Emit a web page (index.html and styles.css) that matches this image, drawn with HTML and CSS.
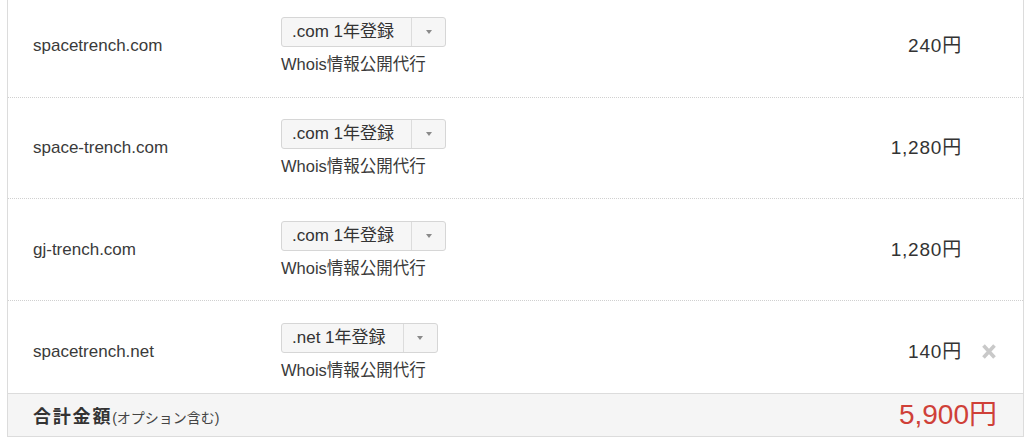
FILE: index.html
```html
<!DOCTYPE html>
<html lang="ja">
<head>
<meta charset="utf-8">
<title>ドメイン一覧</title>
<link rel="stylesheet" href="styles.css">
</head>
<body>
<div class="cart">
  <div class="row">
    <div class="domain">spacetrench.com</div>
    <div class="opts">
      <div class="select"><span class="label">.com 1年登録</span><span class="caret"><i></i></span></div>
      <div class="whois">Whois情報公開代行</div>
    </div>
    <div class="price">240円</div>
    <div class="del"></div>
  </div>
  <div class="row">
    <div class="domain">space-trench.com</div>
    <div class="opts">
      <div class="select"><span class="label">.com 1年登録</span><span class="caret"><i></i></span></div>
      <div class="whois">Whois情報公開代行</div>
    </div>
    <div class="price">1,280円</div>
    <div class="del"></div>
  </div>
  <div class="row">
    <div class="domain">gj-trench.com</div>
    <div class="opts">
      <div class="select"><span class="label">.com 1年登録</span><span class="caret"><i></i></span></div>
      <div class="whois">Whois情報公開代行</div>
    </div>
    <div class="price">1,280円</div>
    <div class="del"></div>
  </div>
  <div class="row last">
    <div class="domain">spacetrench.net</div>
    <div class="opts">
      <div class="select"><span class="label">.net 1年登録</span><span class="caret"><i></i></span></div>
      <div class="whois">Whois情報公開代行</div>
    </div>
    <div class="price">140円</div>
    <div class="del">
      <svg class="x-icon" width="16" height="15" viewBox="0 0 16 15" aria-label="削除">
        <path d="M2.5 1.5 L13.5 13.5 M13.5 1.5 L2.5 13.5" stroke="#c9c9c9" stroke-width="3.6" fill="none"/>
      </svg>
    </div>
  </div>
  <div class="total">
    <div class="total-label"><span class="total-title">合計金額</span><span class="total-note">(オプション含む)</span></div>
    <div class="total-price">5,900円</div>
  </div>
</div>
</body>
</html>
```
FILE: styles.css
```css
html, body {
  margin: 0;
  padding: 0;
  background: #fff;
}

body {
  font-family: "Liberation Sans", "Noto Sans CJK JP", sans-serif;
  color: #333;
  overflow: hidden;
}

.cart {
  box-sizing: border-box;
  width: 1017px;
  margin: -4px 0 0 7px;
  border-left: 1px solid #dcdcdc;
  border-right: 1px solid #dcdcdc;
  border-bottom: 1px solid #dcdcdc;
}

.row {
  display: grid;
  grid-template-columns: 248px 1fr auto 35px;
  align-items: center;
  padding: 21.33px 26px 21.33px 25px;
  border-bottom: 1px dotted #d0d0d0;
}

.row.last {
  padding-top: 22px;
  padding-bottom: 12px;
  border-bottom: none;
}

.domain {
  font-size: 17px;
  line-height: 22px;
  color: #3a3a3a;
}

.opts {
  display: flex;
  flex-direction: column;
  align-items: flex-start;
}

.select {
  display: inline-flex;
  box-sizing: border-box;
  height: 30px;
  border: 1px solid #d6d6d6;
  border-radius: 3px;
  background: #f6f6f6;
}

.label {
  padding: 0 17px 0 10px;
  font-size: 17px;
  line-height: 28px;
  color: #333;
}

.caret {
  display: flex;
  align-items: center;
  justify-content: center;
  width: 33px;
  border-left: 1px solid #dcdcdc;
}

.caret i {
  display: block;
  width: 0;
  height: 0;
  border-top: 4px solid #8a8a8a;
  border-left: 3px solid transparent;
  border-right: 3px solid transparent;
}

.whois {
  margin-top: 6px;
  font-size: 16.5px;
  line-height: 22px;
  color: #3a3a3a;
}

.price {
  font-size: 19px;
  letter-spacing: 0.8px;
  line-height: 24px;
  color: #333;
  text-align: right;
}

.del {
  display: flex;
  justify-content: flex-end;
  align-items: center;
}

.x-icon {
  display: block;
}

.total {
  display: flex;
  justify-content: space-between;
  align-items: center;
  height: 42px;
  padding: 0 26px 0 25px;
  border-top: 1px solid #dcdcdc;
  background: #f5f5f5;
}

.total-label {
  display: flex;
  align-items: baseline;
}

.total-title {
  font-size: 18px;
  font-weight: bold;
  letter-spacing: 1.8px;
  color: #333;
}

.total-note {
  font-size: 14px;
  color: #444;
}

.total-price {
  font-size: 28px;
  line-height: 32px;
  color: #cf4038;
}
```
